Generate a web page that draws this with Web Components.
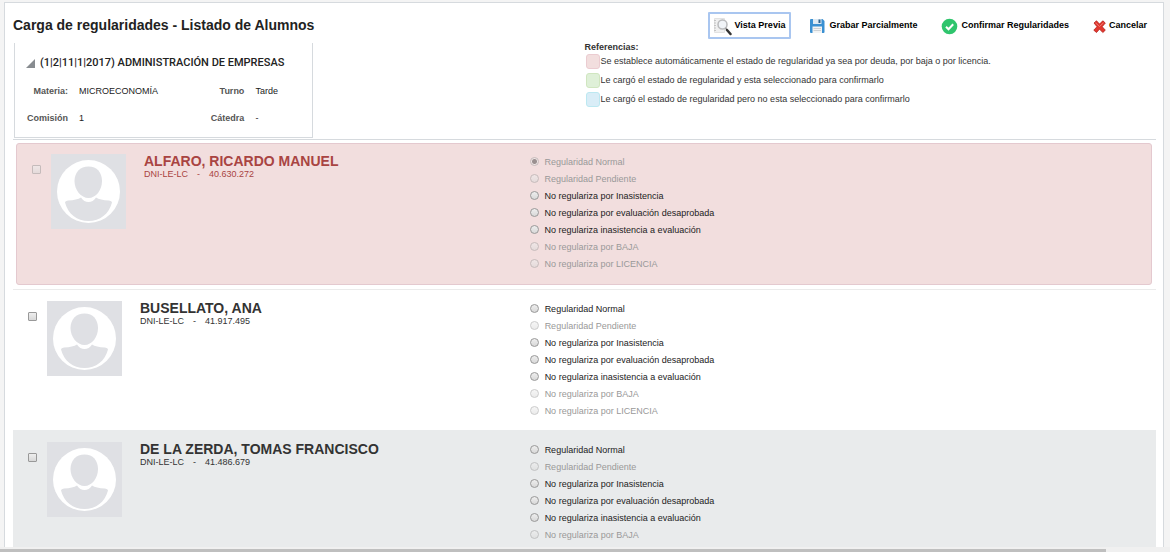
<!DOCTYPE html>
<html lang="es">
<head>
<meta charset="utf-8">
<title>Carga de regularidades</title>
<style>
    html, body {
        margin: 0;
        height: 100%;
        overflow: hidden;
        background: #f4f4f4;
    }
</style>
</head>
<body>
<regularity-page>
    <span slot="title">Carga de regularidades - Listado de Alumnos</span>

    <action-button slot="actions" icon="preview" active>Vista Previa</action-button>
    <action-button slot="actions" icon="save">Grabar Parcialmente</action-button>
    <action-button slot="actions" icon="confirm">Confirmar Regularidades</action-button>
    <action-button slot="actions" icon="cancel">Cancelar</action-button>

    <course-summary slot="summary" subject="MICROECONOMÍA" shift="Tarde" commission="1" chair="-">(1|2|11|1|2017) ADMINISTRACIÓN DE EMPRESAS</course-summary>

    <color-legend slot="legend">
        <legend-item kind="danger">Se establece automáticamente el estado de regularidad ya sea por deuda, por baja o por licencia.</legend-item>
        <legend-item kind="success">Le cargó el estado de regularidad y esta seleccionado para confirmarlo</legend-item>
        <legend-item kind="info">Le cargó el estado de regularidad pero no esta seleccionado para confirmarlo</legend-item>
    </color-legend>

    <student-row document="40.630.272" state="danger">ALFARO, RICARDO MANUEL</student-row>
    <student-row document="41.917.495">BUSELLATO, ANA</student-row>
    <student-row document="41.486.679" striped>DE LA ZERDA, TOMAS FRANCISCO</student-row>
</regularity-page>

<script>
function attachTemplate(element, html) {
    const template = document.createElement('template')
    template.innerHTML = html
    element.attachShadow({ mode: 'open' }).appendChild(template.content.cloneNode(true))
}

class RegularityPage extends HTMLElement {
    constructor() {
        super()
        attachTemplate(this, `
            <style>
                :host {
                    display: flex;
                    flex-direction: column;
                    height: 100vh;
                    font: 9px/12px "Liberation Sans", Arial, sans-serif;
                    color: #333;
                }
                main {
                    flex: 1;
                    min-height: 0;
                    overflow: hidden;
                    margin: 2px 6px 0 4px;
                    padding: 0 7px 0 8px;
                    border: 1px solid #d6dade;
                    border-bottom: 0;
                    background: #fff;
                }
                header {
                    display: flex;
                    align-items: center;
                    justify-content: space-between;
                    height: 40px;
                    padding-top: 4px;
                    padding-right: 3px;
                    box-sizing: border-box;
                }
                h1 {
                    margin: 0;
                    font-size: 14px;
                    line-height: 18px;
                    color: #222;
                }
                nav {
                    display: flex;
                    gap: 13px;
                }
                .info {
                    display: grid;
                    grid-template-columns: 1fr 1fr;
                    align-items: start;
                    padding-bottom: 1px;
                }
                .scrollbar {
                    height: 3px;
                    padding-top: 2px;
                    background: #f0f0f0;
                }
                .thumb {
                    width: 94.5%;
                    height: 3px;
                    background: #bfbfbf;
                }
            </style>

            <main>
                <header>
                    <h1><slot name="title"></slot></h1>
                    <nav><slot name="actions"></slot></nav>
                </header>
                <section class="info">
                    <slot name="summary"></slot>
                    <slot name="legend"></slot>
                </section>
                <slot></slot>
            </main>
            <div class="scrollbar"><div class="thumb"></div></div>
        `)
    }
}

class ActionButton extends HTMLElement {
    icons = {
        preview: `
            <svg width="19" height="19" viewBox="0 0 19 19">
                <path d="M1.5 1.500h10v14h-10z" fill="#f0f0f0" stroke="#e2e2e2"/>
                <path d="M1 3.500h2M1 6h2M1 8.500h2M1 11h2M1 13.500h2" stroke="#c4c4c4"/>
                <circle cx="9.500" cy="7.500" r="4.500" fill="#f1f4f8" stroke="#b9babc" stroke-width="1.500"/>
                <path d="M12.500 11l1.500 1.500" stroke="#999" stroke-width="1.500"/>
                <path d="M14 13l3.500 4" stroke="#333" stroke-width="2.500" stroke-linecap="round"/>
            </svg>`,
        save: `
            <svg width="17" height="16" viewBox="0 0 17 16">
                <path d="M1 2q0-1 1-1h11.500L15.500 3v11q0 1-1 1H2q-1 0-1-1z" fill="#3a90d2"/>
                <path d="M4 1h8.500v5H4z" fill="#dce9f3"/>
                <path d="M9.500 1.500h2v3.500h-2z" fill="#2b5f8c"/>
                <path d="M3.500 8.500h9.500V15H3.500z" fill="#f3f4f4"/>
                <path d="M4.500 10.500h7.500M4.500 12.500h7.500" stroke="#cdd1d4"/>
            </svg>`,
        confirm: `
            <svg width="17" height="17" viewBox="0 0 17 17">
                <circle cx="8.500" cy="8.500" r="7.800" fill="#2fc56d"/>
                <path d="M5 8.700l2.500 2.500 4.700-5" fill="none" stroke="#fff" stroke-width="2"/>
            </svg>`,
        cancel: `
            <svg width="13" height="15" viewBox="0 0 13 15">
                <path d="M1 4l2.500-2.200 3 3.300 3.300-3.300L12.300 4 9.200 7.700l3.100 3.500-2.500 2.300-3.300-3.400-3 3.400L.8 11.200 4 7.700z" fill="#e2382f" stroke="#b3211c" stroke-width=".8"/>
                <path d="M2.500 3.800l4 3.700 4-3.700" fill="none" stroke="#f38a80" stroke-width=".8"/>
            </svg>`
    }

    constructor() {
        super()
        attachTemplate(this, `
            <style>
                :host {
                    display: block;
                }
                button {
                    display: flex;
                    align-items: center;
                    gap: 3px;
                    height: 27px;
                    padding: 0 4px 0 3px;
                    border: 2px solid transparent;
                    border-radius: 1px;
                    background: none;
                    font: bold 9px/12px "Liberation Sans", Arial, sans-serif;
                    color: #000;
                    white-space: nowrap;
                }
                :host([active]) button {
                    border-color: #a9c6f0;
                }
                .icon {
                    display: flex;
                    padding-top: 2px;
                }
            </style>
            <button type="button"><span class="icon"></span><slot></slot></button>
        `)
    }

    connectedCallback() {
        this.shadowRoot.querySelector('.icon').innerHTML = this.icons[this.getAttribute('icon')]
    }
}

class CourseSummary extends HTMLElement {
    constructor() {
        super()
        attachTemplate(this, `
            <style>
                :host {
                    display: block;
                    justify-self: start;
                    margin-left: 1px;
                    padding: 12px 28px 6px 11px;
                    border: 1px solid #d6dade;
                    border-top: 0;
                }
                h2 {
                    display: flex;
                    align-items: center;
                    gap: 5px;
                    margin: 0 0 7px;
                    font: 500 11px/16px Roboto, sans-serif;
                    color: #222;
                }
                dl {
                    display: grid;
                    grid-template-columns: 42px 1fr 42px 29px;
                    column-gap: 11px;
                    row-gap: 1px;
                    margin: 0;
                    line-height: 26px;
                }
                dt {
                    font-weight: bold;
                    text-align: right;
                    color: #555;
                }
                dd {
                    margin: 0;
                    color: #222;
                }
            </style>
            <h2>
                <svg width="9" height="9" viewBox="0 0 9 9"><path d="M9 0v9H0z" fill="#888c90"/></svg>
                <span><slot></slot></span>
            </h2>
            <dl>
                <dt>Materia:</dt><dd id="subject"></dd>
                <dt>Turno</dt><dd id="shift"></dd>
                <dt>Comisión</dt><dd id="commission"></dd>
                <dt>Cátedra</dt><dd id="chair"></dd>
            </dl>
        `)
    }

    connectedCallback() {
        for (const name of ['subject', 'shift', 'commission', 'chair']) {
            this.shadowRoot.getElementById(name).textContent = this.getAttribute(name)
        }
    }
}

class ColorLegend extends HTMLElement {
    constructor() {
        super()
        attachTemplate(this, `
            <style>
                :host {
                    display: block;
                    line-height: 9px;
                }
                .heading {
                    font-weight: bold;
                }
            </style>
            <div class="heading">Referencias:</div>
            <slot></slot>
        `)
    }
}

class LegendItem extends HTMLElement {
    constructor() {
        super()
        attachTemplate(this, `
            <style>
                :host {
                    display: flex;
                    align-items: center;
                    height: 19px;
                    --fill: #f2dede;
                    --edge: #ebccd1;
                }
                :host([kind="success"]) {
                    --fill: #dff0d8;
                    --edge: #d0e6c0;
                }
                :host([kind="info"]) {
                    --fill: #d9edf7;
                    --edge: #bce8f1;
                }
                i {
                    width: 12px;
                    height: 13px;
                    margin: 0 1px;
                    border: 1px solid var(--edge);
                    border-radius: 3px;
                    background: var(--fill);
                }
            </style>
            <i></i><span><slot></slot></span>
        `)
    }
}

class StudentAvatar extends HTMLElement {
    constructor() {
        super()
        attachTemplate(this, `
            <style>
                :host {
                    display: block;
                }
                svg {
                    display: block;
                }
            </style>
            <svg width="75" height="75" viewBox="0 0 75 75">
                <path d="M0 0h75v75H0z" fill="#dfe0e4"/>
                <circle cx="37.500" cy="37.500" r="31.500" fill="#fff"/>
                <path d="M37.500 12.500c8.500 0 13.500 6 13.500 14.500 0 9-6 17-13.500 17S23.500 36 23.500 27c0-8.500 5.500-14.500 14-14.500z" fill="#dfe0e4"/>
                <path d="M14 48.500q0-1.500 3-2 9-.5 13-3 3 4.500 7.500 4.500t7.500-4.500q4 2.500 13 3 3 .5 3 2C58 60 49 67 37.500 67S17 60 14 48.500z" fill="#dfe0e4"/>
            </svg>
        `)
    }
}

class RegularityOptions extends HTMLElement {
    options = [
        { text: 'Regularidad Normal', enabled: true },
        { text: 'Regularidad Pendiente', enabled: false },
        { text: 'No regulariza por Inasistencia', enabled: true },
        { text: 'No regulariza por evaluación desaprobada', enabled: true },
        { text: 'No regulariza inasistencia a evaluación', enabled: true },
        { text: 'No regulariza por BAJA', enabled: false },
        { text: 'No regulariza por LICENCIA', enabled: false }
    ]

    constructor() {
        super()
        attachTemplate(this, `
            <style>
                :host {
                    display: block;
                    color: #222;
                }
                label {
                    display: flex;
                    align-items: center;
                    gap: 6px;
                    height: 17px;
                }
                label.disabled {
                    color: #999;
                }
                input {
                    appearance: none;
                    width: 9px;
                    height: 9px;
                    margin: 0;
                    border: 1px solid #999;
                    border-radius: 50%;
                    background: linear-gradient(#eee, #d8d8d8);
                }
                input:checked {
                    background: radial-gradient(#444 2px, #eee 3px);
                }
                input:disabled {
                    opacity: 0.5;
                }
            </style>
            <div id="list"></div>
        `)
    }

    connectedCallback() {
        const locked = this.hasAttribute('locked')
        const list = this.shadowRoot.getElementById('list')

        this.options.forEach((option, index) => {
            const label = document.createElement('label')
            const input = document.createElement('input')
            input.type = 'radio'
            input.name = 'regularity'
            input.checked = locked && index === 0
            input.disabled = !option.enabled || input.checked
            label.classList.toggle('disabled', input.disabled)
            label.append(input, option.text)
            list.append(label)
        })
    }
}

class StudentRow extends HTMLElement {
    constructor() {
        super()
        attachTemplate(this, `
            <style>
                :host {
                    display: block;
                    border-top: 1px solid #ebebeb;
                }
                :host([state="danger"]) {
                    padding: 3px 4px 4px 3px;
                    border-top-color: #d6dade;
                    color: #a94442;
                }
                :host([striped]) {
                    border-top-color: #e9ebec;
                    background: #e9ebec;
                }
                article {
                    display: grid;
                    grid-template-columns: 45.2% 1fr;
                    padding: 10px 0 11px;
                }
                :host([state="danger"]) article {
                    padding: 9px 0 12px;
                    border: 1px solid #e4c9cf;
                    border-radius: 3px;
                    background: #f2dede;
                }
                .person {
                    display: flex;
                    align-items: flex-start;
                    padding: 1px 0 0 15px;
                }
                input {
                    appearance: none;
                    width: 9px;
                    height: 9px;
                    margin: 11px 10px 0 0;
                    border: 1px solid #999;
                    border-radius: 1px;
                    background: linear-gradient(#eee, #d8d8d8);
                }
                input:disabled {
                    opacity: 0.5;
                }
                h3 {
                    margin: 0;
                    font-size: 14px;
                    line-height: 14px;
                }
                .text {
                    margin-left: 18px;
                }
                .document {
                    display: flex;
                    gap: 9px;
                }
            </style>
            <article>
                <div class="person">
                    <input type="checkbox" aria-labelledby="name">
                    <student-avatar></student-avatar>
                    <div class="text">
                        <h3 id="name"><slot></slot></h3>
                        <div class="document"><span>DNI-LE-LC</span><span>-</span><span id="number"></span></div>
                    </div>
                </div>
                <regularity-options></regularity-options>
            </article>
        `)
    }

    connectedCallback() {
        this.shadowRoot.getElementById('number').textContent = this.getAttribute('document')

        if (this.getAttribute('state') === 'danger') {
            this.shadowRoot.querySelector('input').disabled = true
            this.shadowRoot.querySelector('regularity-options').setAttribute('locked', '')
        }
    }
}

// Rows go first, so that they can set attributes before their options are built
customElements.define('student-row', StudentRow)
customElements.define('regularity-options', RegularityOptions)
customElements.define('student-avatar', StudentAvatar)
customElements.define('legend-item', LegendItem)
customElements.define('color-legend', ColorLegend)
customElements.define('course-summary', CourseSummary)
customElements.define('action-button', ActionButton)
customElements.define('regularity-page', RegularityPage)
</script>
</body>
</html>
